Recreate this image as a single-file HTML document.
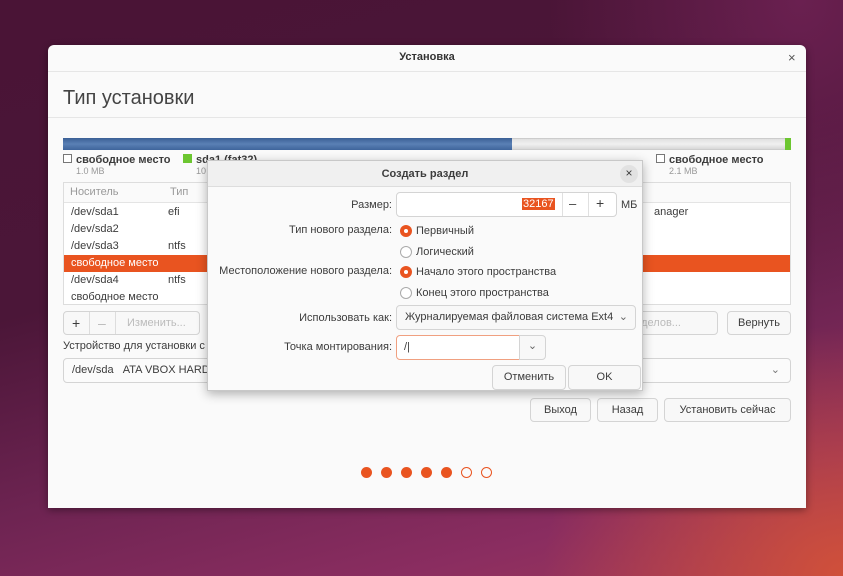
<!DOCTYPE html>
<html><head><meta charset="utf-8"><style>
*{box-sizing:border-box;margin:0;padding:0}
body{width:843px;height:576px;overflow:hidden;position:relative;font-family:"Liberation Sans","DejaVu Sans",sans-serif;font-size:11px;color:#3c3c3c;
background:
radial-gradient(ellipse 300px 250px at 843px 576px,#d0503a 0%,rgba(200,74,60,0) 100%),
radial-gradient(ellipse 250px 300px at 800px 0px,#6a2050 0%,rgba(60,15,40,0) 100%),
linear-gradient(165deg,#4a1436 0%,#4b1638 40%,#6e2452 65%,#8a2d60 85%,#a0385a 100%);}
.a{position:absolute}
.win{left:48px;top:45px;width:758px;height:463px;background:#fafafa;border-radius:6px 6px 0 0;box-shadow:0 2px 8px rgba(0,0,0,.4)}
.t{position:absolute;white-space:nowrap}
.btn{position:absolute;border:1px solid #d4d4d4;border-radius:4px;background:#f8f8f8;text-align:center;color:#3c3c3c}
.row{position:absolute;left:0;width:728px;height:17px;line-height:17px}
.rad{position:absolute;left:192px;width:12px;height:12px;border-radius:50%}
.on{background:#e95420;}
.on:after{content:"";position:absolute;left:4px;top:4px;width:4px;height:4px;border-radius:50%;background:#fff}
.off{border:1px solid #aaa;background:#fff}
</style></head><body>
<div class="a win">
  <div class="t" style="left:0;width:758px;top:6px;text-align:center;font-weight:bold;font-size:11px;color:#333">Установка</div>
  <div class="t" style="left:740px;top:5px;font-size:13px;color:#555">×</div>
  <div class="a" style="left:0;top:26px;width:758px;height:1px;background:#e6e6e6"></div>
  <div class="t" style="left:15px;top:42px;font-size:20px;color:#444">Тип установки</div>
  <div class="a" style="left:0;top:72px;width:758px;height:1px;background:#e6e6e6"></div>
  <div class="a" style="left:15px;top:93px;width:728px;height:12px;background:linear-gradient(#e0e0e0,#f0f0f0 50%,#d8d8d8);border:1px solid #ccc"></div>
  <div class="a" style="left:15px;top:93px;width:449px;height:12px;background:linear-gradient(#3a5f95,#5a80b5 50%,#3f659c)"></div>
  <div class="a" style="left:737px;top:93px;width:6px;height:12px;background:#6cc630"></div>
  <div class="t" style="left:15px;top:109px;font-weight:bold;font-size:11px"><span style="display:inline-block;width:9px;height:9px;border:1px solid #777;background:#fff;margin-right:4px"></span>свободное место</div>
  <div class="t" style="left:28px;top:121px;font-size:9px;color:#999">1.0 MB</div>
  <div class="t" style="left:135px;top:109px;font-weight:bold"><span style="display:inline-block;width:9px;height:9px;background:#6cc630;margin-right:4px"></span>sda1 (fat32)</div>
  <div class="t" style="left:148px;top:121px;font-size:9px;color:#999">10</div>
  <div class="t" style="left:608px;top:109px;font-weight:bold"><span style="display:inline-block;width:9px;height:9px;border:1px solid #777;background:#fff;margin-right:4px"></span>свободное место</div>
  <div class="t" style="left:621px;top:121px;font-size:9px;color:#999">2.1 MB</div>
  <div class="a" style="left:15px;top:137px;width:728px;height:123px;border:1px solid #ddd;background:#fff">
    <div class="a" style="left:0;top:0;width:726px;height:20px;border-bottom:1px solid #e4e4e4;background:#fafafa"></div>
    <div class="t" style="left:6px;top:3px;color:#999">Носитель</div>
    <div class="t" style="left:106px;top:3px;color:#999">Тип</div>
    <div class="row" style="top:21px"><span class="t" style="left:7px">/dev/sda1</span><span class="t" style="left:104px">efi</span><span class="t" style="left:590px">anager</span></div>
    <div class="row" style="top:38px"><span class="t" style="left:7px">/dev/sda2</span></div>
    <div class="row" style="top:55px"><span class="t" style="left:7px">/dev/sda3</span><span class="t" style="left:104px">ntfs</span></div>
    <div class="row" style="top:72px;background:#e95420;color:#fff;width:726px"><span class="t" style="left:7px">свободное место</span></div>
    <div class="row" style="top:89px"><span class="t" style="left:7px">/dev/sda4</span><span class="t" style="left:104px">ntfs</span></div>
    <div class="row" style="top:106px"><span class="t" style="left:7px">свободное место</span></div>
  </div>
  <div class="btn" style="left:15px;top:266px;width:137px;height:24px">
    <span class="t" style="left:8px;top:3px;font-size:14px">+</span>
    <span class="a" style="left:25px;top:0;width:1px;height:22px;background:#ddd"></span>
    <span class="t" style="left:34px;top:3px;font-size:14px;color:#bbb">–</span>
    <span class="a" style="left:51px;top:0;width:1px;height:22px;background:#ddd"></span>
    <span class="t" style="left:63px;top:5px;color:#bbb">Изменить...</span>
  </div>
  <div class="btn" style="left:530px;top:266px;width:140px;height:24px;line-height:22px;color:#bbb">а разделов...</div>
  <div class="btn" style="left:679px;top:266px;width:64px;height:24px;line-height:22px">Вернуть</div>
  <div class="t" style="left:15px;top:295px">Устройство для установки с</div>
  <div class="btn" style="left:15px;top:313px;width:728px;height:25px;background:#fbfbfb;text-align:left;line-height:23px;padding-left:8px">/dev/sda&nbsp;&nbsp;&nbsp;ATA VBOX HARD<span class="t" style="right:10px;top:0;color:#777">⌄</span></div>
  <div class="btn" style="left:482px;top:353px;width:61px;height:24px;line-height:22px">Выход</div>
  <div class="btn" style="left:549px;top:353px;width:61px;height:24px;line-height:22px">Назад</div>
  <div class="btn" style="left:616px;top:353px;width:127px;height:24px;line-height:22px">Установить сейчас</div>
  <div class="a" style="left:313px;top:422px">
    <span class="a" style="left:0;width:11px;height:11px;border-radius:50%;background:#e95420"></span>
    <span class="a" style="left:20px;width:11px;height:11px;border-radius:50%;background:#e95420"></span>
    <span class="a" style="left:40px;width:11px;height:11px;border-radius:50%;background:#e95420"></span>
    <span class="a" style="left:60px;width:11px;height:11px;border-radius:50%;background:#e95420"></span>
    <span class="a" style="left:80px;width:11px;height:11px;border-radius:50%;background:#e95420"></span>
    <span class="a" style="left:100px;width:11px;height:11px;border-radius:50%;border:1.5px solid #e95420"></span>
    <span class="a" style="left:120px;width:11px;height:11px;border-radius:50%;border:1.5px solid #e95420"></span>
  </div>
</div>
<div class="a" style="left:207px;top:160px;width:436px;height:231px;background:#fafafa;border:1px solid #c8c8c8;box-shadow:0 3px 10px rgba(0,0,0,.3)">
  <div class="a" style="left:0;top:0;width:434px;height:26px;background:#f0f0f0;border-bottom:1px solid #ddd"></div>
  <div class="t" style="left:0;width:434px;top:7px;text-align:center;font-weight:bold">Создать раздел</div>
  <div class="a" style="left:412px;top:4px;width:18px;height:18px;border-radius:50%;background:#e2e2e2;text-align:center;line-height:17px;font-size:12px">×</div>
  <div class="t" style="right:250px;top:38px">Размер:</div>
  <div class="btn" style="left:188px;top:31px;width:221px;height:25px;background:#fff;text-align:left">
    <span class="t" style="left:125px;top:5px;background:#e95420;color:#fff;padding:0 1px">32167</span>
    <span class="a" style="left:165px;top:0;width:1px;height:23px;background:#e0e0e0"></span>
    <span class="t" style="left:172px;top:3px;font-size:13px">–</span>
    <span class="a" style="left:191px;top:0;width:1px;height:23px;background:#e0e0e0"></span>
    <span class="t" style="left:199px;top:2px;font-size:14px">+</span>
  </div>
  <div class="t" style="left:413px;top:38px">МБ</div>
  <div class="t" style="right:250px;top:63px">Тип нового раздела:</div>
  <div class="rad on" style="top:64px"></div><div class="t" style="left:208px;top:64px">Первичный</div>
  <div class="rad off" style="top:85px"></div><div class="t" style="left:208px;top:85px">Логический</div>
  <div class="t" style="right:250px;top:104px">Местоположение нового раздела:</div>
  <div class="rad on" style="top:105px"></div><div class="t" style="left:208px;top:105px">Начало этого пространства</div>
  <div class="rad off" style="top:126px"></div><div class="t" style="left:208px;top:126px">Конец этого пространства</div>
  <div class="t" style="right:250px;top:151px">Использовать как:</div>
  <div class="btn" style="left:188px;top:144px;width:240px;height:25px;text-align:left;padding-left:8px;line-height:23px">Журналируемая файловая система Ext4<span class="t" style="right:7px;top:0;color:#666">⌄</span></div>
  <div class="t" style="right:250px;top:180px">Точка монтирования:</div>
  <div class="a" style="left:188px;top:174px;width:124px;height:25px;border:1px solid #f0a080;border-radius:4px 0 0 4px;background:#fff;padding:5px 7px">/|</div>
  <div class="btn" style="left:311px;top:174px;width:27px;height:25px;border-radius:0 4px 4px 0;line-height:21px;color:#666">⌄</div>
  <div class="btn" style="left:284px;top:204px;width:74px;height:25px;line-height:23px">Отменить</div>
  <div class="btn" style="left:360px;top:204px;width:73px;height:25px;line-height:23px">OK</div>
</div>
</body></html>
